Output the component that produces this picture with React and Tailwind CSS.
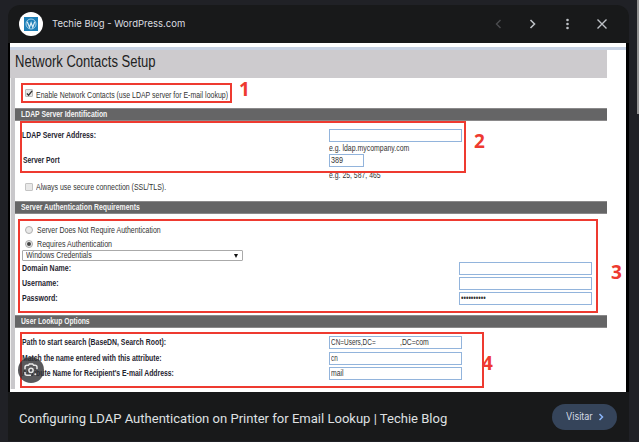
import React, { useLayoutEffect, useRef, useState } from "react";

// Condenses a line of text horizontally to the given width.
function Fit({ w, className = "", children }) {
  const ref = useRef(null);
  const [scale, setScale] = useState(1);
  useLayoutEffect(() => {
    setScale(w / ref.current.offsetWidth);
  }, [w]);
  return (
    <span className={`flex shrink-0 ${className}`} style={{ width: w }}>
      <span ref={ref} className="inline-block shrink-0 origin-left whitespace-nowrap" style={{ transform: `scaleX(${scale})` }}>
        {children}
      </span>
    </span>
  );
}

function Section({ title, w }) {
  return (
    <div className="flex h-[13px] w-[592px] shrink-0 items-center border-y border-[#8a898a] bg-[#656566] pl-[6px] text-[9px] font-bold leading-none text-[#f4f4f4]">
      <Fit w={w}>{title}</Fit>
    </div>
  );
}

function Field({ className = "w-[133px]", children }) {
  return (
    <div className={`flex h-[13px] shrink-0 items-center border border-[#92b4dc] bg-white pl-[1px] text-[9px] leading-none text-[#333] ${className}`}>
      {children}
    </div>
  );
}

function Row({ label, w, labelClass = "w-[307px]", fieldClass, children }) {
  return (
    <div className="flex h-[13px] shrink-0 items-center">
      <div className={`shrink-0 text-[9px] font-bold leading-none text-[#1f2530] ${labelClass}`}>
        <Fit w={w}>{label}</Fit>
      </div>
      <Field className={fieldClass}>{children}</Field>
    </div>
  );
}

function Mark({ className, children }) {
  return (
    <span className={`absolute font-['Open_Sans','Noto_Sans',sans-serif] text-[19px] font-bold leading-none text-[#ee3a30] ${className}`}>
      {children}
    </span>
  );
}

function WordPressLogo() {
  return (
    <div className="flex size-6 shrink-0 items-center justify-center rounded-full bg-white">
      <div className="flex size-[14px] items-center justify-center bg-[#1e80b8]">
        <svg viewBox="0 0 24 24" className="size-[12px]" fill="none" stroke="#d9ecf7">
          <circle cx="12" cy="12" r="10" strokeWidth="1.400" />
          <path d="M4.500 7.500 9 18.500l3.200-9 3.300 9 4-11" strokeWidth="2.400" />
        </svg>
      </div>
    </div>
  );
}

function Form() {
  return (
    <div className="relative flex h-[349px] w-[616px] shrink-0 flex-col overflow-hidden bg-white font-['Liberation_Sans',Arial,sans-serif]">
      <div className="mt-1 h-[3px] shrink-0 bg-[#c8d3e4]" />
      <div className="flex h-[28px] w-[597px] shrink-0 items-center bg-[#cdcbce] pb-[4px] pl-[5px] text-[16px] leading-none text-[#222]">
        <h1><Fit w={141}>Network Contacts Setup</Fit></h1>
      </div>
      <div className="flex h-[311px] shrink-0 border-l border-[#eee]">
        <div className="w-1 shrink-0 bg-[#c9c8cb]" />
        <div className="flex w-[592px] flex-col text-[9px] leading-none text-[#333]">
          <div className="flex h-[30px] shrink-0 items-center pl-[10px]">
            <span className="flex size-[8px] items-center justify-center rounded-[1px] border border-[#bbb] bg-[#e6e6e6]">
              <svg viewBox="0 0 8 8" className="size-[7px] shrink-0" fill="none" stroke="#333" strokeWidth="1.5"><path d="m1 4 2 2 4-5" /></svg>
            </span>
            <Fit w={192} className="ml-[3px] mt-[4px]">Enable Network Contacts (use LDAP server for E-mail lookup)</Fit>
          </div>
          <Section title="LDAP Server Identification" w={86} />
          <div className="flex h-[80px] shrink-0 flex-col pl-[7px]">
            <div className="h-2 shrink-0" />
            <Row label="LDAP Server Address:" w={74} />
            <div className="ml-[307px] flex h-3 shrink-0 items-center pt-px"><Fit w={80}>e.g. ldap.mycompany.com</Fit></div>
            <Row label="Server Port" w={37} labelClass="w-[307px] pl-px" fieldClass="w-[35px]"><Fit w={12}>389</Fit></Row>
            <div className="ml-[307px] mt-[6px] h-[7px] shrink-0 overflow-hidden"><div className="-mt-[2px] leading-[9px]"><Fit w={52}>e.g. 25, 587, 465</Fit></div></div>
            <div className="mt-[2px] flex h-[9px] shrink-0 items-center pl-[3px]">
              <span className="size-[8px] rounded-[1px] border border-[#c4c4c4] bg-[#e8e8e8]" />
              <Fit w={130} className="ml-[3px] mt-px">Always use secure connection (SSL/TLS).</Fit>
            </div>
          </div>
          <Section title="Server Authentication Requirements" w={119} />
          <div className="flex h-[101px] shrink-0 flex-col">
            <div className="mt-[10px] flex h-[11px] shrink-0 items-center pl-[10px]">
              <span className="size-[8px] rounded-full border border-[#b0b0b0] bg-[#e8e8e8]" />
              <Fit w={124} className="ml-1 mt-[2px]">Server Does Not Require Authentication</Fit>
            </div>
            <div className="mt-[3px] flex h-[11px] shrink-0 items-center pl-[10px]">
              <span className="flex size-[8px] items-center justify-center rounded-full border border-[#aaa] bg-[#e8e8e8]"><span className="size-1 rounded-full bg-[#444]" /></span>
              <Fit w={75} className="ml-1 mt-[2px]">Requires Authentication</Fit>
            </div>
            <div className="ml-[7px] mt-px flex h-[11px] w-[221px] shrink-0 items-center justify-between rounded-[1px] border border-[#aaa] pl-[3px] pr-[4px]">
              <Fit w={66}>Windows Credentials</Fit>
              <svg viewBox="0 0 4 4" className="size-1" fill="#111"><path d="M0 0h4L2 4z" /></svg>
            </div>
            <div className="mt-px flex flex-col gap-[2px] pl-[7px]">
              <Row label="Domain Name:" w={49} labelClass="w-[437px]" />
              <Row label="Username:" w={37} labelClass="w-[437px]" />
              <Row label="Password:" w={36} labelClass="w-[437px]"><Fit w={25}>••••••••••</Fit></Row>
            </div>
          </div>
          <Section title="User Lookup Options" w={69} />
          <div className="mt-2 flex flex-col gap-[2.5px] pl-[7px]">
            <Row label="Path to start search (BaseDN, Search Root):" w={144}>
              <Fit w={45}>CN=Users,DC=</Fit>
              <Fit w={29} className="ml-[24px]">,DC=com</Fit>
            </Row>
            <Row label="Match the name entered with this attribute:" w={140}><Fit w={7}>cn</Fit></Row>
            <Row label="Attribute Name for Recipient's E-mail Address:" w={152}><Fit w={13}>mail</Fit></Row>
          </div>
        </div>
      </div>
      <div className="absolute left-[11px] top-[40px] h-[20px] w-[211px] border-2 border-[#ee3a30]" />
      <div className="absolute left-[10px] top-[78px] h-[52px] w-[446px] border-2 border-[#ee3a30]" />
      <div className="absolute left-[8px] top-[176px] h-[94px] w-[580px] border-2 border-[#ee3a30]" />
      <div className="absolute left-[10px] top-[289px] h-[56px] w-[464px] border-2 border-[#ee3a30]" />
      <Mark className="left-[229px] top-[37px]">1</Mark>
      <Mark className="left-[464px] top-[89px]">2</Mark>
      <Mark className="left-[601px] top-[220px]">3</Mark>
      <Mark className="left-[472px] top-[311px]">4</Mark>
      <div className="absolute left-[8px] top-[314px] flex size-[26px] items-center justify-center rounded-full bg-[#303033]/80">
        <svg viewBox="0 0 24 24" className="size-[16px]" fill="none" stroke="#e8e8e8" strokeWidth="2.200">
          <path d="M3 11V8a3 3 0 0 1 3-3h2l1.500-2h5L16 5h2a3 3 0 0 1 3 3v3M3 15v2a3 3 0 0 0 3 3h6" /><circle cx="12" cy="12.500" r="3.200" /><circle cx="18.500" cy="18.500" r="1.500" fill="#e8e8e8" stroke="none" />
        </svg>
      </div>
    </div>
  );
}

export default function App() {
  return (
    <div className="flex h-[442px] w-[639px] justify-between overflow-hidden bg-[#202126] font-['Roboto',sans-serif]">
      <div className="ml-2 mt-[5px] flex h-[436px] w-[621px] flex-col rounded-tl-xl rounded-tr-xl bg-[#18191a]">
        <header className="flex h-[38px] shrink-0 items-center pl-[11px] pr-[21px]">
          <WordPressLogo />
          <Fit w={133} className="ml-[9px] mt-px font-['Inter',sans-serif] text-[9.5px] text-[#dcdde0]">Techie Blog - WordPress.com</Fit>
          <div className="ml-auto flex items-center gap-[23px] text-[#bdc1c6]">
            <svg viewBox="0 0 12 12" className="-mr-px size-3 text-[#4b4c4f]" fill="none" stroke="currentColor" strokeWidth="1.400"><path d="M8.500 2 4.500 6l4 4" /></svg>
            <svg viewBox="0 0 12 12" className="size-3" fill="none" stroke="currentColor" strokeWidth="1.600"><path d="m4.500 2 4 4-4 4" /></svg>
            <svg viewBox="0 0 12 12" className="size-3" fill="currentColor"><circle cx="6.500" cy="2" r="1.300" /><circle cx="6.500" cy="6" r="1.300" /><circle cx="6.500" cy="10" r="1.300" /></svg>
            <svg viewBox="0 0 12 12" className="size-3" fill="none" stroke="currentColor" strokeWidth="1.400"><path d="m1.500 1.500 9 9m0-9-9 9" /></svg>
          </div>
        </header>
        <div className="flex shrink-0 bg-black pl-[2px]"><Form /></div>
        <footer className="flex h-[50px] items-center justify-between pl-[11px] pr-[12px]">
          <Fit w={428} className="mt-[3px] text-[13.5px] text-[#dfe0e2]">Configuring LDAP Authentication on Printer for Email Lookup | Techie Blog</Fit>
          <button className="flex h-[26px] w-[65px] items-center justify-center gap-[5px] rounded-full bg-[#35445a] text-[10px] text-[#d5dbe5]">
            <Fit w={27} className="font-['Inter',sans-serif]">Visitar</Fit>
            <svg viewBox="0 0 6 8" className="h-2 w-[6px]" fill="none" stroke="#8ab4f8" strokeWidth="1.500"><path d="m1.500 1 3 3-3 3" /></svg>
          </button>
        </footer>
      </div>
      <div className="h-[114px] w-[2px] bg-[#929292]" />
    </div>
  );
}
